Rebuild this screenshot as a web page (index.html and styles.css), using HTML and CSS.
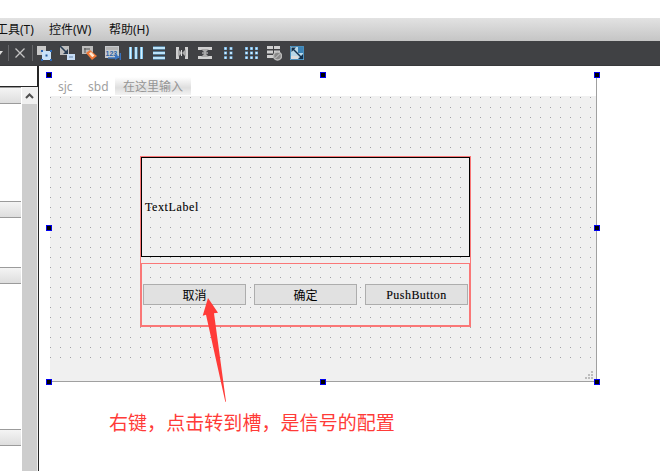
FILE: index.html
```html
<!DOCTYPE html>
<html lang="zh-CN">
<head>
<meta charset="utf-8">
<title>Designer</title>
<link rel="stylesheet" href="styles.css">
</head>
<body>
<nav class="menubar"><span class="m1">工具(T)</span><span class="m2">控件(W)</span><span class="m3">帮助(H)</span></nav>
<div class="toolbar">
  <svg class="caret" width="4" height="16" viewBox="0 0 4 16"><path d="M-3 6H3L0 10Z" fill="#ddd"/></svg>
  <i class="sep"></i>
  <svg class="close" width="12" height="16" viewBox="0 0 12 16"><path d="M1.5 3.5l9 9M10.5 3.5l-9 9" stroke="#c4c4c4" stroke-width="1.3"/></svg>
  <i class="sep"></i>
  <div class="icons">
    <svg viewBox="0 0 16 16"><path d="M1 1H10V10H1Z" fill="#c9c9c9"/><path d="M6 6H15V15H6Z" fill="#c9e1f8"/><path d="M5 5h2v2H5zM14 5h2v2h-2zM5 14h2v2H5zM14 14h2v2h-2z" fill="#2c67b5"/><path d="M9.5 9.5h2v2h-2z" fill="#245b9c"/></svg>
    <svg viewBox="0 0 16 16"><path d="M1 1H10V10H1Z" fill="#bdbdbd"/><path d="M8 9H16V15H8Z" fill="#c5dcf5"/><path d="M10 12h4" stroke="#6685ad"/><path d="M1 1L8 8" stroke="#263b53" stroke-width="1.6"/><path d="M9 4V9H4Z" fill="#263b53"/></svg>
    <svg viewBox="0 0 16 16"><path d="M0 1H11V9H0Z" fill="#bcbcbc"/><path d="M2 4h6M3 3v5" stroke="#535353"/><path d="M4 8L8 5L15 11L10 15Z" fill="#f17938"/><path d="M7 8.5L9 7L12.5 10.5L10.3 12.2Z" fill="#ffe8d3"/></svg>
    <svg viewBox="0 0 16 16"><path d="M0 1H14V13H0Z" fill="#c6c9cd"/><path d="M1 2H13V5H1Z" fill="#b4b4b4"/><text x="0.5" y="11" class="digits">123</text><path d="M3 13H11M15.3 8V15" stroke="#3973c0" stroke-width="1.4"/><path d="M10 9L15 12L10 15Z" fill="#3973c0"/></svg>
    <svg viewBox="0 0 16 16"><path d="M2.5 2v12M8 2v12M13.5 2v12" stroke="#6ab6e5" stroke-width="3"/><path d="M2.5 2v12M8 2v12M13.5 2v12" stroke="#d8f2ff" stroke-width="1.5"/></svg>
    <svg viewBox="0 0 16 16"><path d="M2 3h12M2 8h12M2 13h12" stroke="#6ab6e5" stroke-width="3"/><path d="M2 3h12M2 8h12M2 13h12" stroke="#d8f2ff" stroke-width="1.5"/></svg>
    <svg viewBox="0 0 16 16"><path d="M2 2H5V14H2ZM11 2H14V14H11Z" fill="#d0d0d0"/><path d="M4 4L8 8L4 12ZM12 4L8 8L12 12Z" fill="#aaa"/><path d="M7.5 5v6" stroke="#ddd"/></svg>
    <svg viewBox="0 0 16 16"><path d="M1 2H15V5H1ZM1 11H15V14H1Z" fill="#d0d0d0"/><path d="M4 4H12L8 8ZM4 12H12L8 8Z" fill="#aaa"/><path d="M5 8h6" stroke="#ddd"/></svg>
    <svg viewBox="0 0 16 16"><path d="M5.5 2v12M11 2v12" stroke="#65a9da" stroke-width="3" stroke-dasharray="3 1.6"/><path d="M5.5 2.5v12M11 2.5v12" stroke="#d5efff" stroke-width="1.7" stroke-dasharray="2 2.6"/></svg>
    <svg viewBox="0 0 16 16"><path d="M3.5 2v12M8.5 2v12M13.5 2v12" stroke="#65a9da" stroke-width="3" stroke-dasharray="3 1.6"/><path d="M3.5 2.5v12M8.5 2.5v12M13.5 2.5v12" stroke="#d5efff" stroke-width="1.7" stroke-dasharray="2 2.6"/></svg>
    <svg viewBox="0 0 16 16"><path d="M1 2.5h6M8 2.5h6M1 7h6M8 7h6M1 11.5h6" stroke="#d0d0d0" stroke-width="3"/><circle cx="11.5" cy="11" r="4" fill="#888" stroke="#bbb" stroke-width="1.5"/><path d="M9 13.5l5-5" stroke="#ccc"/></svg>
    <svg viewBox="0 0 16 16"><path d="M1 1H15V15H1Z" fill="#b8d7e7"/><path d="M9 1H15V8H9Z" fill="#3b83b6"/><path d="M2 11H9V14H2Z" fill="#dcdcdc"/><path d="M1.5 1.5H14.5V14.5H1.5Z" fill="none" stroke="#4a8fbd"/><path d="M4 4L12 12" stroke="#12304c" stroke-width="1.5"/><path d="M2.5 2.5H7L2.5 7ZM14 14V9L9 14Z" fill="#12304c"/></svg>
  </div>
</div>
<main class="workspace">
  <aside class="sidebar">
    <div class="filter"></div>
    <div class="panel">
      <div class="sections"><b></b><b class="s2"></b><b class="s3"></b><b class="s4"></b></div>
      <div class="scrollbar"><svg width="15" height="16" viewBox="0 0 15 16"><path d="M4 10L7.5 6.5L11 10" fill="none" stroke="#505050" stroke-width="2"/></svg><div class="thumb"></div></div>
    </div>
  </aside>
  <section class="canvas">
    <div class="form">
      <div class="formmenu"><span class="sjc">sjc</span><span class="sbd">sbd</span><span class="entry">在这里输入</span></div>
      <div class="grid">
        <div class="dots"></div>
        <div class="layout">
          <div class="label">TextLabel</div>
          <div class="row"><div class="btn">取消</div><div class="btn">确定</div><div class="btn latin">PushButton</div></div>
        </div>
        <svg class="grip" width="8" height="8"><path d="M6 0h2v2H6zM3 3h2v2H3zM6 3h2v2H6zM0 6h2v2H0zM3 6h2v2H3zM6 6h2v2H6z" fill="#bdbdbd"/></svg>
      </div>
      <i class="h left top"></i><i class="h center top"></i><i class="h right top"></i>
      <i class="h left mid"></i><i class="h right mid"></i>
      <i class="h left bottom"></i><i class="h center bottom"></i><i class="h right bottom"></i>
      <svg class="arrow" width="26" height="106" viewBox="202 297 26 106"><path d="M208 298L218 312.7L214 313.3L226 401.7H225.3L206 314.8L202.7 315.7Z" fill="#ff3b38"/></svg>
    </div>
    <p class="note">右键，点击转到槽，是信号的配置</p>
  </section>
</main>
</body>
</html>
```
FILE: styles.css
```css
* { box-sizing: border-box; }
body { margin: 0; padding-top: 18px; width: 660px; height: 471px; overflow: hidden; background: #fff; font-family: "Noto Sans", "Noto Sans CJK SC", sans-serif; }
svg { display: block; flex: none; }
.menubar { height: 23px; display: flex; background: linear-gradient(#e2e2e2, #c5c5c5); font-size: 12px; line-height: 24px; color: #111; white-space: nowrap; }
.menubar span { flex: none; }
.m1 { width: 53px; margin-left: -4px; }
.m2 { width: 60px; }
.toolbar { height: 25px; display: flex; align-items: center; background: #404144; border-bottom: 1px solid #38393b; }
.sep { width: 1px; height: 16px; background: #66676a; }
.caret { margin-right: 4px; }
.close { margin: 0 6px 0 5px; }
.icons { display: flex; gap: 7px; margin-left: 3px; }
.icons svg { width: 16px; height: 16px; }
.digits { font: bold 7px "Liberation Sans", sans-serif; fill: #2b62a7; }
.workspace { display: flex; height: 405px; }
.sidebar { width: 39px; border-right: 1px solid #252525; display: flex; flex-direction: column; }
.filter { height: 21px; border-bottom: 1px solid #252525; border-right: 1px solid #252525; }
.panel { flex: 1; display: flex; gap: 1px; }
.sections { width: 21px; }
.sections b { display: block; height: 17px; border: solid #9b9b9b; border-width: 1px 0; background: linear-gradient(#f4f4f4, #dedede); }
.sections .s2 { margin-top: 97px; }
.sections .s3 { margin-top: 49px; }
.sections .s4 { margin-top: 145px; }
.scrollbar { width: 16px; background: #f0f0f0; display: flex; flex-direction: column; padding-top: 1px; }
.thumb { flex: 1; width: 15px; background: #cdcdcd; }
.canvas { flex: 1; padding: 9px 0 0 11px; }
.form { position: relative; width: 547px; height: 307px; border: solid #a0a0a0; border-width: 0 1px 1px 0; }
.formmenu { height: 21px; display: flex; font-size: 12px; line-height: 24px; color: #a0a0a0; }
.sjc { width: 30px; margin-left: 8px; }
.sbd { width: 27px; }
.entry { width: 76px; height: 18px; margin-top: 2px; padding-left: 8px; line-height: 20px; background: linear-gradient(#fff, #dedede 60%, #f3f3f3); color: #959595; }
.grid { position: relative; height: 285px; background: #f0f0f0; padding: 60px 0 0 90px; }
.dots { position: absolute; left: 0; top: 1px; width: 546px; height: 261px; background: conic-gradient(from 270deg at 1px 1px, #a0a0a4 90deg, transparent 0) 0 0 / 10px 10px; }
.layout { position: relative; width: 331px; height: 171px; border: 1px solid #fa7777; }
.label { height: 100px; border: 1px solid #000; padding-left: 3px; line-height: 98px; font-family: "Liberation Serif", serif; font-size: 12px; letter-spacing: .6px; color: #000; -webkit-text-stroke: .1px #000; }
.row { height: 63px; margin-top: 6px; border: 1px solid #fa7777; padding: 20px 1px 0; display: flex; gap: 8px; }
.btn { width: 103px; height: 21px; border: 1px solid #adadad; background: #e1e1e1; font-size: 12px; line-height: 21px; text-align: center; color: #000; }
.latin { font-family: "Liberation Serif", serif; letter-spacing: .45px; line-height: 20px; -webkit-text-stroke: .1px #000; }
.grip { position: absolute; right: 3px; bottom: 2px; }
.h { position: absolute; width: 6px; height: 6px; background: #000; border: 1px solid #0000ee; }
.left { left: -4px; }
.center { left: 270px; }
.right { left: 544px; }
.top { top: -3px; }
.mid { top: 150px; }
.bottom { top: 304px; }
.arrow { position: absolute; left: 152px; top: 222px; }
.note { margin: 26px 0 0 59px; font-size: 19px; line-height: 28px; letter-spacing: .06px; color: #ff3b38; white-space: nowrap; font-family: "Noto Sans CJK SC", sans-serif; font-weight: 400; }
```
